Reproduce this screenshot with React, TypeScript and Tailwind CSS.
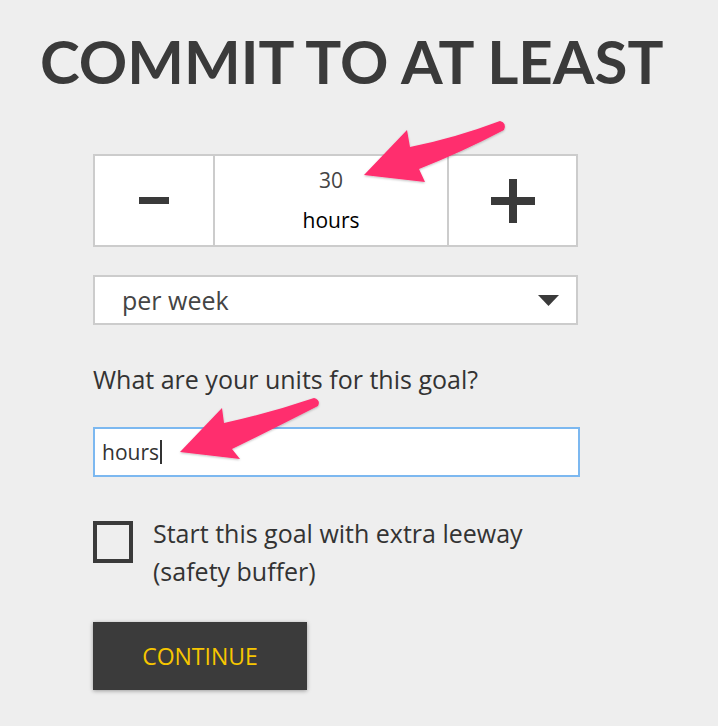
import React from 'react';

const body = { fontFamily: '"Open Sans", "Noto Sans", sans-serif' };

const Arrows: React.FC = () => (
  <svg className="pointer-events-none absolute left-0 top-0" width="718" height="726" viewBox="0 0 718 726">
    <defs>
      <filter id="sh" x="-20%" y="-20%" width="140%" height="140%">
        <feDropShadow dx="0" dy="1" stdDeviation="1" floodColor="#000" floodOpacity="0.25" />
      </filter>
    </defs>
    <path
      d="M364,175 L407,130 L410,147 Q455,138 500,121 Q507,123 504,130 Q462,152 419,169 L425,182 Z"
      fill="#ff2d6e"
      filter="url(#sh)"
    />
    <path
      d="M180,452 L222,408 L224,423 Q270,413 314,398 Q321,400 318,406 Q275,428 232,449 L240,459 Z"
      fill="#ff2d6e"
      filter="url(#sh)"
    />
  </svg>
);

export default function App() {
  return (
    <div className="relative w-[718px] h-[726px] overflow-hidden bg-[#eeeeee] text-[#333]" style={body}>
      <h1
        className="pt-[31px] pl-[40px] text-[60px] leading-[60px] font-bold text-[#3a3a3a] whitespace-nowrap"
        style={{ fontFamily: 'Lato, "Noto Sans", sans-serif' }}
      >
        COMMIT TO AT LEAST
      </h1>

      <div className="ml-[93px] w-[486px]">
        {/* stepper */}
        <div className="mt-[63px] flex h-[93px] w-[485px] border-2 border-[#cccccc] bg-white">
          <button className="flex w-[120px] items-center justify-center border-r-2 border-[#cccccc]">
            <span className="block h-[7px] w-[30px] bg-[#3a3a3a]" />
          </button>
          <div className="flex flex-1 flex-col items-center pt-[10px]">
            <span className="text-[21px] leading-[28px] text-[#444]">30</span>
            <span className="mt-[12px] text-[21px] leading-[28px] text-black">hours</span>
          </div>
          <button className="relative flex w-[129px] items-center justify-center border-l-2 border-[#cccccc]">
            <span className="relative block h-[44px] w-[44px]">
              <span className="absolute left-0 top-[18px] h-[8px] w-[44px] bg-[#3a3a3a]" />
              <span className="absolute left-[18px] top-0 h-[44px] w-[8px] bg-[#3a3a3a]" />
            </span>
          </button>
        </div>

        {/* select */}
        <div className="mt-[28px] flex h-[50px] w-[485px] items-center justify-between border-2 border-[#cccccc] bg-white pl-[27px] pr-[17px]">
          <span className="text-[25px] leading-none text-[#444]">per week</span>
          <svg width="21" height="11" viewBox="0 0 21 11">
            <path d="M0,0 L21,0 L10.5,11 Z" fill="#3a3a3a" />
          </svg>
        </div>

        <p className="mt-[38px] text-[25px] leading-[32px] text-[#333]">What are your units for this goal?</p>

        <div className="mt-[32px] flex h-[50px] w-[487px] items-center border-2 border-[#7cb8f0] bg-white pl-[7px]">
          <span className="text-[21px] leading-none text-[#333]">hours</span>
          <span className="ml-[1px] block h-[24px] w-[2px] bg-[#333]" />
        </div>

        <div className="mt-[44px] flex items-start gap-[20px]">
          <span className="block h-[42px] w-[40px] shrink-0 border-4 border-[#3a3a3a]" />
          <p className="-mt-[7px] text-[25px] leading-[38px] text-[#333]">
            Start this goal with extra leeway
            <br />
            (safety buffer)
          </p>
        </div>

        <button className="mt-[32px] flex h-[68px] w-[214px] items-center justify-center bg-[#3b3b3b] text-[23px] text-[#f7c600] shadow-[0_1px_4px_rgba(0,0,0,0.35)]">
          CONTINUE
        </button>
      </div>

      <Arrows />
    </div>
  );
}
